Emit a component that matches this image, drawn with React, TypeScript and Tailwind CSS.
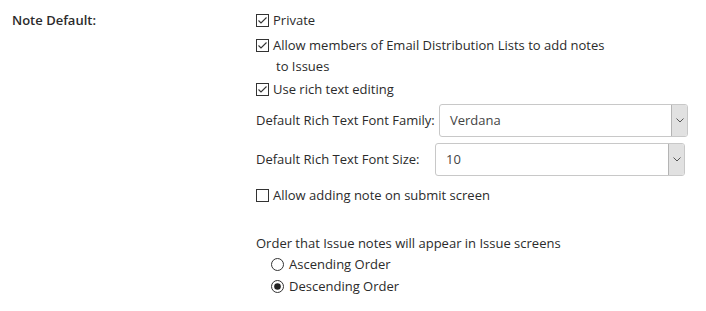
import React from 'react'

const font = { fontFamily: '"Segoe UI", "Open Sans", "Noto Sans", sans-serif' }

const Check = ({ checked }: { checked: boolean }) => (
    <svg width="13" height="13" viewBox="0 0 13 13" className="shrink-0">
        <rect x="0.5" y="0.5" width="12" height="12" fill="#fff" stroke="#333" />
        {checked && <path d="M2.5 6.5 L5 9 L10.5 3.5" fill="none" stroke="#333" strokeWidth="1.1" />}
    </svg>
)

const Radio = ({ checked }: { checked: boolean }) => (
    <svg width="13" height="13" viewBox="0 0 13 13" className="shrink-0">
        <circle cx="6.5" cy="6.5" r="6" fill="#fff" stroke="#333" />
        {checked && <circle cx="6.5" cy="6.5" r="3.3" fill="#222" />}
    </svg>
)

const Select = ({ value, className }: { value: string; className: string }) => (
    <div className={`h-[33px] flex items-stretch border border-[#c8c8c8] rounded-[3px] bg-white overflow-hidden ${className}`}>
        <div className="flex-1 flex items-center pl-[10px] text-[#444]">{value}</div>
        <div className="w-[16px] bg-[#e1e1e1] border-l border-[#b4b4b4] flex items-center justify-center">
            <svg width="8" height="5" viewBox="0 0 8 5">
                <path d="M0.5 0.5 L4 4 L7.5 0.5" fill="none" stroke="#555" strokeWidth="1" />
            </svg>
        </div>
    </div>
)

export default function App() {
    return (
        <div className="w-[706px] h-[311px] bg-white text-[13px] leading-[21px] text-[#2b2b2b]" style={font}>
            <div className="flex pt-[10px]">
                <div className="w-[256px] pl-3 font-semibold">Note Default:</div>
                <div className="flex flex-col">
                    <label className="flex items-center gap-[4px]">
                        <Check checked />
                        <span>Private</span>
                    </label>
                    <label className="flex items-start gap-[4px] mt-[4px]">
                        <span className="h-[21px] flex items-center"><Check checked /></span>
                        <span className="flex flex-col">
                            <span>Allow members of Email Distribution Lists to add notes</span>
                            <span className="pl-[3px]">to Issues</span>
                        </span>
                    </label>
                    <label className="flex items-center gap-[4px] mt-[2px]">
                        <Check checked />
                        <span>Use rich text editing</span>
                    </label>
                    <div className="flex items-center mt-[4px]">
                        <span className="w-[183px]">Default Rich Text Font Family:</span>
                        <Select value="Verdana" className="w-[249px]" />
                    </div>
                    <div className="flex items-center mt-[6px]">
                        <span className="w-[179px]">Default Rich Text Font Size:</span>
                        <Select value="10" className="w-[250px]" />
                    </div>
                    <label className="flex items-center gap-[4px] mt-[9px]">
                        <Check checked={false} />
                        <span>Allow adding note on submit screen</span>
                    </label>
                    <div className="mt-[27px]">Order that Issue notes will appear in Issue screens</div>
                    <div className="flex flex-col pl-[15px]">
                        <label className="flex items-center gap-[5px]">
                            <Radio checked={false} />
                            <span>Ascending Order</span>
                        </label>
                        <label className="flex items-center gap-[5px] mt-[1px]">
                            <Radio checked />
                            <span>Descending Order</span>
                        </label>
                    </div>
                </div>
            </div>
        </div>
    )
}
